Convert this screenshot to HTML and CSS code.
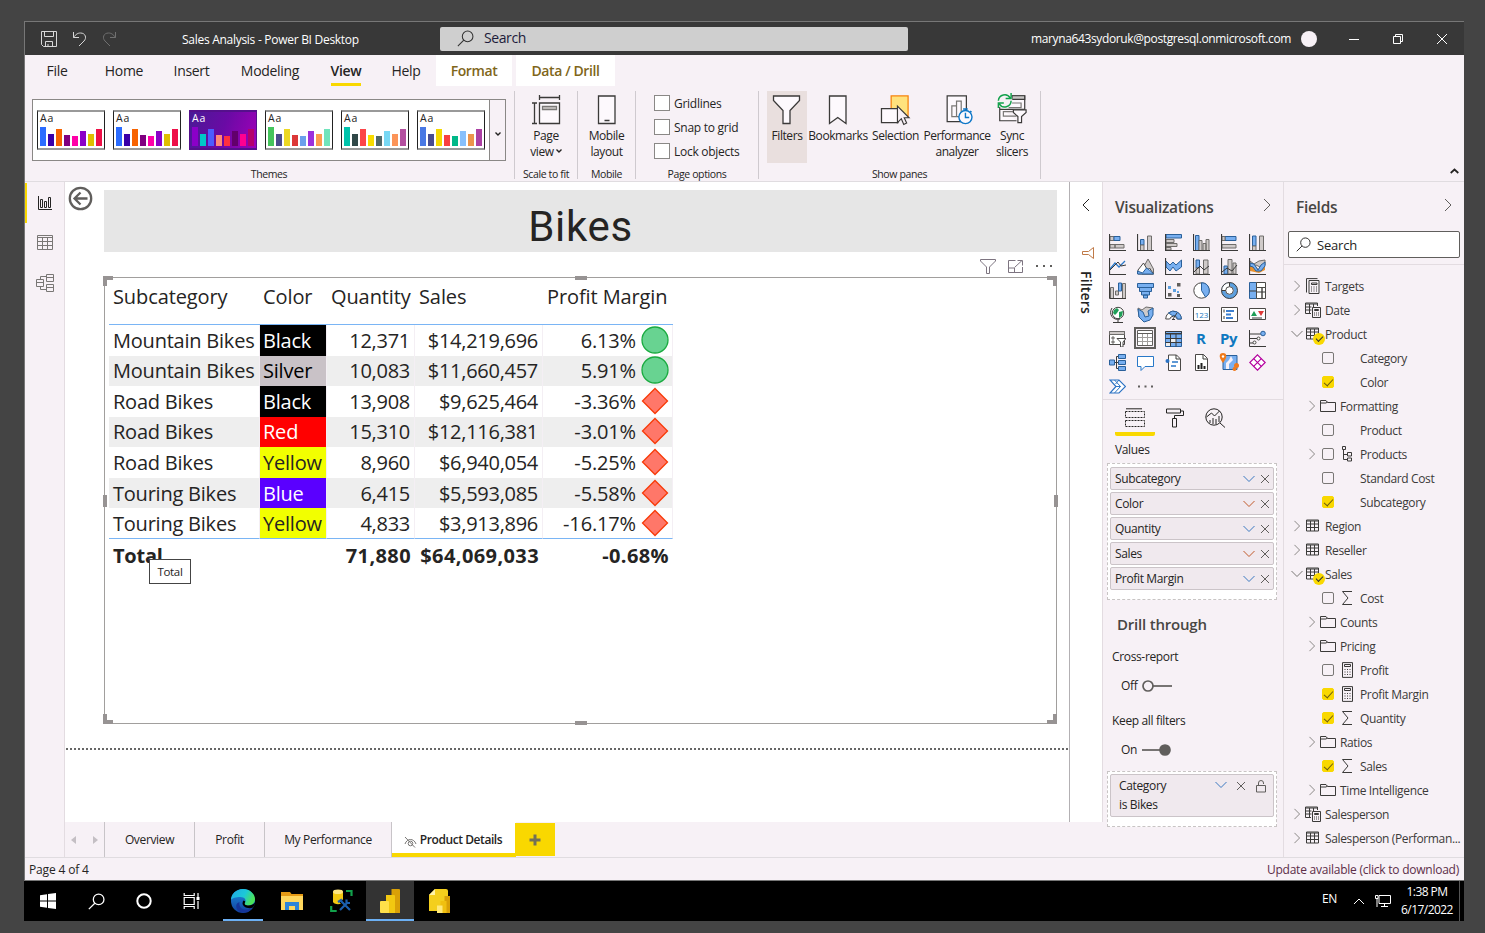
FILE: index.html
```html
<!DOCTYPE html>
<html lang="en">
<head>
<meta charset="utf-8">
<title>Sales Analysis - Power BI Desktop</title>
<link rel="stylesheet" href="styles.css">
</head>
<body>
<svg class="defs" width="0" height="0">
  <symbol id="search" viewBox="0 0 16 16"><circle cx="10" cy="6" r="5"/><path d="M6.4 9.6L.8 15.2"/></symbol>
  <symbol id="right" viewBox="0 0 8 14"><path d="M1 1l6 6-6 6"/></symbol>
  <symbol id="left" viewBox="0 0 8 14"><path d="M7 1L1 7l6 6"/></symbol>
  <symbol id="down" viewBox="0 0 12 8"><path d="M.5 1L6 6.5 11.500 1"/></symbol>
  <symbol id="close" viewBox="0 0 10 10"><path d="M1 1l8 8M9 1L1 9"/></symbol>
  <symbol id="table" viewBox="0 0 16 16"><path d="M1.500 2h12v11h-12zM1.500 3h12M1.500 6h12M1.500 9.500h12M5.500 3v10M9.500 3v10"/></symbol>
  <symbol id="calc" viewBox="0 0 16 16"><path d="M3.500.6h10v14.800h-10zM5.500 2.500h6v2h-6z"/><path stroke-dasharray="1 1.500" d="M5.500 7.500h7M5.500 10h7M5.500 12.500h7"/></symbol>
  <symbol id="calcs" viewBox="0 0 16 16"><path d="M1.500 14.500V.6h11M4 2.500h10v13H4zM6.500 5h5.500v1.500H6.500z"/><path stroke-dasharray="1 1.500" d="M6 9h7M6 11h7M6 13h7"/></symbol>
  <symbol id="tablecalc" viewBox="0 0 16 16"><path d="M6 11.500H.5V1h12v3M.5 2h12M.5 5h6M.5 8h6M4.500 2v9M8.500 2v3"/><path d="M7.500 5.500h8v10h-8zM9.500 7.500h4v1h-4z"/><path stroke-dasharray="1 1" d="M9 11h5M9 13h5"/></symbol>
  <symbol id="folder" viewBox="0 0 16 16"><path d="M.5 13.500v-11h5.500l1.500 2h8v9zM.5 5h5.500l1.500-1"/></symbol>
  <symbol id="sigma" viewBox="0 0 16 16"><path d="M13 1.500H3.500l5.500 6.500-5.500 6.500H13"/></symbol>
  <symbol id="hier" viewBox="0 0 16 16"><path d="M3.500.5h3v3h-3zM4.500 3.500v10h4M4.500 8.500h4M8.500 6.500h4v3.500h-4zM8.500 12h4v3h-4z"/></symbol>
  <symbol id="axes" viewBox="0 0 17 17"><path fill="none" stroke="#3b3a39" stroke-width="1.200" d="M.5 0v16.500H17"/></symbol>
</svg>

<div class="window">
  <header class="titlebar">
    <div class="quick">
      <svg width="16" height="16" viewBox="0 0 16 16"><path d="M.5.5h15v15H2.500l-2-2zM3.500.5v5h9v-5M4.500 15.500v-5h7v5M7 13v2"/></svg>
      <svg width="15" height="16" viewBox="0 0 15 16"><path d="M1.500 1v5.500H7M1.500 6.500C4 3 6 2 8.500 2c5 0 6.500 5 3.500 8l-5 5"/></svg>
      <svg class="dim" width="15" height="16" viewBox="0 0 15 16"><path d="M13.500 1v5.500H8M13.500 6.500C11 3 9 2 6.500 2c-5 0-6.500 5-3.500 8l5 5"/></svg>
    </div>
    <div class="doc-title">Sales Analysis - Power BI Desktop</div>
    <div class="top-search"><svg width="17" height="17"><use href="#search"/></svg><span>Search</span></div>
    <div class="account"><span>maryna643sydoruk@postgresql.onmicrosoft.com</span><i class="avatar"></i></div>
    <div class="winbtns">
      <svg width="12" height="12" viewBox="0 0 12 12"><path d="M1 6.500h10"/></svg>
      <svg width="12" height="12" viewBox="0 0 12 12"><path d="M1.500 3.500h7v7h-7zM3.500 3.500v-2h7v7h-2"/></svg>
      <svg width="12" height="12" viewBox="0 0 12 12"><path d="M1 1l10 10M11 1L1 11"/></svg>
    </div>
  </header>

  <nav class="menu">
    <a class="m-file">File</a><a class="m-home">Home</a><a class="m-insert">Insert</a><a class="m-model">Modeling</a><a class="m-view on">View</a><a class="m-help">Help</a><a class="m-format ctx">Format</a><a class="m-data ctx">Data / Drill</a>
  </nav>

  <section class="ribbon">
    <div class="group g-themes">
      <div class="gallery">
        <div class="cards">
          <div class="card t1"><b>Aa</b><div class="bars"><i></i><i></i><i></i><i></i><i></i><i></i><i></i><i></i></div></div>
          <div class="card t1"><b>Aa</b><div class="bars"><i></i><i></i><i></i><i></i><i></i><i></i><i></i><i></i></div></div>
          <div class="card t3"><b>Aa</b><div class="bars"><i></i><i></i><i></i><i></i><i></i><i></i><i></i><i></i></div></div>
          <div class="card t4"><b>Aa</b><div class="bars"><i></i><i></i><i></i><i></i><i></i><i></i><i></i><i></i></div></div>
          <div class="card t5"><b>Aa</b><div class="bars"><i></i><i></i><i></i><i></i><i></i><i></i><i></i><i></i></div></div>
          <div class="card t6"><b>Aa</b><div class="bars"><i></i><i></i><i></i><i></i><i></i><i></i><i></i><i></i></div></div>
        </div>
        <div class="more"><svg width="6" height="4" viewBox="0 0 6 4"><path d="M.5.5L3 3 5.500.5"/></svg></div>
      </div>
      <div class="glabel">Themes</div>
    </div>
    <div class="group g-scale">
      <div class="rbtn"><svg width="30" height="30" viewBox="0 0 30 30"><g fill="none" stroke="#3b3a39" stroke-width="1.300"><path d="M8.500 0v5M28.500 0v5M8.500 2.500h20M1 8h5M1 28.500h5M3.500 8v20.500"/><path fill="#fdf9fd" d="M8.500 8h20v20.500h-20z"/><path fill="#d2cdcd" stroke="#797775" d="M11.500 11.500h14v3h-14z"/></g></svg><span>Page<br>view<svg class="tiny" width="6" height="4" viewBox="0 0 6 4"><path d="M.5.5L3 3 5.500.5"/></svg></span></div>
      <div class="glabel">Scale to fit</div>
    </div>
    <div class="group g-mobile">
      <div class="rbtn"><svg width="30" height="30" viewBox="0 0 30 30"><path fill="#fdf9fd" stroke="#3b3a39" stroke-width="1.300" d="M6.500 1h16.500v27.500H6.500zM12.500 25.500h5"/></svg><span>Mobile<br>layout</span></div>
      <div class="glabel">Mobile</div>
    </div>
    <div class="group g-options">
      <div class="checks"><label><i></i>Gridlines</label><label><i></i>Snap to grid</label><label><i></i>Lock objects</label></div>
      <div class="glabel">Page options</div>
    </div>
    <div class="group g-panes">
      <div class="panes">
        <div class="rbtn p1 sel"><svg width="30" height="30" viewBox="0 0 30 30"><path fill="#fdf9fd" stroke="#3b3a39" stroke-width="1.300" d="M1.500 1h26v4.500l-9.500 10v13h-7v-13l-9.500-10z"/></svg><span>Filters</span></div>
        <div class="rbtn p2"><svg width="30" height="30" viewBox="0 0 30 30"><path fill="#fdf9fd" stroke="#3b3a39" stroke-width="1.300" d="M6.500 1h16.500v27.500l-8.250-6-8.250 6z"/></svg><span>Bookmarks</span></div>
        <div class="rbtn p3"><svg width="30" height="31" viewBox="0 0 30 31"><path fill="#ffe27d" stroke="#f7830c" stroke-width="1.300" d="M10 1h17.500v20.500H10z"/><path fill="#fdf9fd" stroke="#3b3a39" stroke-width="1.300" d="M0 14h17v14.500H0z"/><path fill="#f8f1f6" stroke="#3b3a39" stroke-width="1.200" d="M16.500 11.500v17l4-4 2.500 6 3-1.500-2.500-5.500h5z"/></svg><span>Selection</span></div>
        <div class="rbtn p4"><svg width="30" height="32" viewBox="0 0 30 32"><g fill="none" stroke="#3b3a39" stroke-width="1.300"><path fill="#fdf9fd" d="M4.500 1h20.500v27.500H4.500z"/><path stroke="#797775" d="M9.500 23V11.500h5V23zM14.500 23V6.500h5V23z"/></g><circle cx="24" cy="23.500" r="7" fill="#fdf9fd" stroke="#0f78c8" stroke-width="1.500"/><path fill="none" stroke="#0f78c8" stroke-width="1.500" d="M24 19v5h4M21.500 15h5M24 15v2M29 17l1.500 1.500"/></svg><span>Performance<br>analyzer</span></div>
        <div class="rbtn p5"><svg width="34" height="33" viewBox="0 0 34 33"><g fill="none" stroke="#3b3a39" stroke-width="1.300"><path fill="#fdf9fd" d="M3.500 15v15.500H22M17 3h14v15H3.500"/><path fill="#c8c6c4" d="M17 3h14v4H17z"/><path stroke="#797775" d="M17 11h10v5H13M18 20.500H7.500v5H22"/><path fill="#fdf9fd" d="M18.500 18.500h14v3l-5 4.500v6.500h-4V26l-5-4.500z"/></g><circle cx="9" cy="8.500" r="8.500" fill="#f7f1f6"/><path fill="none" stroke="#12a14b" stroke-width="1.600" d="M2 8.500A7 7 0 0 1 15 5.500M16 0v6h-6M16 8.500A7 7 0 0 1 3 12M2 16.500v-5.500h6"/></svg><span>Sync<br>slicers</span></div>
      </div>
      <div class="glabel">Show panes</div>
    </div>
    <svg class="collapse" width="9" height="6" viewBox="0 0 9 6"><path d="M.7 5l3.800-3.500L8.300 5"/></svg>
  </section>

  <main class="body">
    <aside class="views">
      <div class="view on"><svg width="14" height="14" viewBox="0 0 14 14"><path d="M.5 0v13.500H14M2.500 3.500h2v8h-2zM6.500 5.500h2v6h-2zM10.500 1.500h2v10h-2z"/></svg></div>
      <div class="view"><svg width="16" height="16" viewBox="0 0 16 16"><path d="M.5.5h15v14H.5zM.5 2.500h15M.5 6.500h15M.5 10.500h15M5.500 2.500v12M10.500 2.500v12"/></svg></div>
      <div class="view"><svg width="18" height="18" viewBox="0 0 18 18"><path d="M.5 5.500h7v7h-7zM.5 8.500h7M10.500.5h7v7h-7zM10.500 3.500h7M10.500 10.500h7v7h-7zM10.500 13.500h7M4.500 5.500V2.500h6M4.500 12.500v3h6"/></svg></div>
    </aside>

    <div class="center">
      <div class="workspace">
        <div class="canvas">
          <svg class="back" width="25" height="25" viewBox="0 0 25 25"><circle cx="12.500" cy="12.500" r="10.700"/><path d="M19.500 12.500H7M12.500 6.500l-6 6 6 6"/></svg>
          <div class="page">
            <h1>Bikes</h1>
            <div class="vhead">
              <svg width="16" height="15" viewBox="0 0 16 15"><path d="M.5.5h15v1.500L9.500 8v6.500h-3V8L.5 2z"/></svg>
              <svg width="15" height="13" viewBox="0 0 15 13"><path d="M7.500.5h-7v12h14V7M.5 8h6v4.500M6.500 7.500l7.500-7M9.500.5h5v5"/></svg>
              <svg width="16" height="4" viewBox="0 0 16 4"><path fill="#605e5c" stroke="none" d="M0 1h2v2H0zM7 1h2v2H7zM14 1h2v2h-2z"/></svg>
            </div>
            <div class="visual">
              <i class="h nw"></i><i class="h n"></i><i class="h ne"></i><i class="h w"></i><i class="h e"></i><i class="h sw"></i><i class="h s"></i><i class="h se"></i>
              <table>
                <colgroup><col class="c1"><col class="c2"><col class="c3"><col class="c4"><col class="c5"></colgroup>
                <thead><tr><th>Subcategory</th><th class="hue">Color</th><th class="r">Quantity</th><th>Sales</th><th>Profit Margin</th></tr></thead>
                <tbody>
                  <tr><td>Mountain Bikes</td><td class="hue black">Black</td><td class="r">12,371</td><td class="r">$14,219,696</td><td class="kpi">6.13%<svg width="28" height="28" viewBox="0 0 28 28"><circle class="good" cx="14" cy="14" r="13"/></svg></td></tr>
                  <tr><td>Mountain Bikes</td><td class="hue silver">Silver</td><td class="r">10,083</td><td class="r">$11,660,457</td><td class="kpi">5.91%<svg width="28" height="28" viewBox="0 0 28 28"><circle class="good" cx="14" cy="14" r="13"/></svg></td></tr>
                  <tr><td>Road Bikes</td><td class="hue black">Black</td><td class="r">13,908</td><td class="r">$9,625,464</td><td class="kpi">-3.36%<svg width="28" height="28" viewBox="0 0 28 28"><path class="bad" d="M14 1.500L26.500 14 14 26.500 1.500 14z"/></svg></td></tr>
                  <tr><td>Road Bikes</td><td class="hue red">Red</td><td class="r">15,310</td><td class="r">$12,116,381</td><td class="kpi">-3.01%<svg width="28" height="28" viewBox="0 0 28 28"><path class="bad" d="M14 1.500L26.500 14 14 26.500 1.500 14z"/></svg></td></tr>
                  <tr><td>Road Bikes</td><td class="hue yellow">Yellow</td><td class="r">8,960</td><td class="r">$6,940,054</td><td class="kpi">-5.25%<svg width="28" height="28" viewBox="0 0 28 28"><path class="bad" d="M14 1.500L26.500 14 14 26.500 1.500 14z"/></svg></td></tr>
                  <tr><td>Touring Bikes</td><td class="hue blue">Blue</td><td class="r">6,415</td><td class="r">$5,593,085</td><td class="kpi">-5.58%<svg width="28" height="28" viewBox="0 0 28 28"><path class="bad" d="M14 1.500L26.500 14 14 26.500 1.500 14z"/></svg></td></tr>
                  <tr><td>Touring Bikes</td><td class="hue yellow">Yellow</td><td class="r">4,833</td><td class="r">$3,913,896</td><td class="kpi">-16.17%<svg width="28" height="28" viewBox="0 0 28 28"><path class="bad" d="M14 1.500L26.500 14 14 26.500 1.500 14z"/></svg></td></tr>
                </tbody>
                <tfoot><tr><td>Total</td><td></td><td class="r">71,880</td><td class="r">$64,069,033</td><td class="r">-0.68%</td></tr></tfoot>
              </table>
              <div class="tip">Total</div>
            </div>
          </div>
          <div class="page-end"></div>
        </div>
        <aside class="filters">
          <svg class="chev" width="8" height="14"><use href="#left"/></svg>
          <svg class="fun" width="12" height="12" viewBox="0 0 12 12"><path d="M11.500.5v11L6.500 7.500H.5v-3h6z" fill="none" stroke="#c07a48"/></svg>
          <span>Filters</span>
        </aside>
      </div>
      <div class="pages">
        <div class="arrows"><i class="al"></i><i class="ar"></i></div>
        <a class="t-over">Overview</a><a class="t-profit">Profit</a><a class="t-perf">My Performance</a>
        <a class="t-det on"><svg width="13" height="12" viewBox="0 0 13 12"><path d="M1 8c2-6 9-6 11 0M1 1l10 10.500"/><circle cx="6.500" cy="7.500" r="2.300"/></svg>Product Details</a>
        <div class="add"><svg width="12" height="12" viewBox="0 0 12 12"><path d="M6 .5v11M.5 6h11"/></svg></div>
      </div>
    </div>

    <aside class="viz">
      <div class="phead"><h2>Visualizations</h2><svg width="8" height="14"><use href="#right"/></svg></div>
      <div class="icons">
        <svg viewBox="0 0 17 17"><path class="g" d="M1 2.500h4v4H1z"/><path class="b" d="M5 2.500h6v4H5z"/><path class="g" d="M1 10.500h5v3.500H1zM6 10.500h9v3.500H6z"/><use href="#axes"/></svg>
        <svg viewBox="0 0 17 17"><path class="b" d="M3.500 5.500h3.500V11H3.500z"/><path class="g" d="M3.500 11h3.500v5.500H3.500zM10.500 2h4v14.500h-4z"/><use href="#axes"/></svg>
        <svg viewBox="0 0 17 17"><path class="b" d="M1 .5h15.500v3.500H1z"/><path class="g" d="M1 5.500h8v3H1zM1 9.500h11v3H1zM1 13.500h5v2.500H1z"/><use href="#axes"/></svg>
        <svg viewBox="0 0 17 17"><path class="b" d="M2.500 1.500H6v15H2.500z"/><path class="g" d="M6 6.500h3v10H6zM10 9.500h3v7h-3zM13 5.500h3v11h-3z"/><use href="#axes"/></svg>
        <svg viewBox="0 0 17 17"><path class="b" d="M4 2.500h11v4H4z"/><path class="g" d="M1 2.500h3v4H1zM1 10.500h14v3.500H1z"/><use href="#axes"/></svg>
        <svg viewBox="0 0 17 17"><path class="b" d="M3.500 2h3.500v10H3.500z"/><path class="g" d="M3.500 12h3.500v4.500H3.500zM10.500 2h4v14.500h-4z"/><use href="#axes"/></svg>

        <svg viewBox="0 0 17 17"><path class="bl" d="M1 11l5-6 4 4 6-6"/><path class="k" d="M1 12l8-8 3 4 5-1"/><use href="#axes"/></svg>
        <svg viewBox="0 0 17 17"><path class="g" d="M5 12L11 1l5.500 10v5H5z"/><path class="w" d="M1 12l5.500-7 4 7 2-2 4 6H1z"/><path class="b" d="M.5 16v-3l5 2 4-5 3 2 4 4z"/></svg>
        <svg viewBox="0 0 17 17"><path class="b" d="M1 3l4 4 3-3 3 3 5.500-5v7L11 13 8 9l-3 4-4-4z"/><use href="#axes"/></svg>
        <svg viewBox="0 0 17 17"><path class="b" d="M3 2h3.500v8H3z"/><path class="g" d="M3 10h3.500v6H3zM10.500 2H15v14h-4.500z"/><path class="k" d="M1 14l6-6 4 4 5-4"/><use href="#axes"/></svg>
        <svg viewBox="0 0 17 17"><path class="b" d="M3 8h3.500v8H3z"/><path class="g" d="M7 1.500h4V16H7zM12 5h3v11h-3z"/><path class="k" d="M1 14l5-4 5 3 5-6"/><use href="#axes"/></svg>
        <svg viewBox="0 0 17 17"><path class="g" d="M1 3l4 3 5-3 6-1v5l-5 2-4-2-6 2z"/><path fill="#e8912d" d="M1 9l4-3 5 6 6-5v5l-6 3-9-2z"/><path class="b" d="M1 5l4 1 4 6 3-5 4-3v4l-4 5H7L4 9 1 8z"/><use href="#axes"/></svg>

        <svg viewBox="0 0 17 17"><path class="g" d="M1.500 5.500h3v11h-3zM6.500 9h3v4h-3zM13.500 1.500h3v15h-3z"/><path class="b" d="M9.500 1h3v8h-3z"/><path class="k" d="M.5 0v16.500H17"/></svg>
        <svg viewBox="0 0 17 17"><path class="b" d="M.5 1.500h16v4H.5zM2.500 5.500h12v4h-12zM4.500 9.500h8V13h-8zM6.500 13h4v3h-4z"/></svg>
        <svg viewBox="0 0 17 17"><path fill="#605e5c" d="M12 1h3.500v3.500H12zM3 11h3.500v3.500H3zM12 12h3v3h-3z"/><path fill="#5da0df" d="M3 4h3v3H3zM8 7h3v3H8zM12 9h2v2h-2z"/><path class="k" d="M.5 0v16.500H17"/></svg>
        <svg viewBox="0 0 17 17"><circle cx="8.500" cy="8.500" r="7.700" class="w"/><path class="b" d="M8.500.8a7.700 7.700 0 0 1 4 14.300l-4-6.600z"/></svg>
        <svg viewBox="0 0 17 17"><circle cx="8.500" cy="8.500" r="6" fill="none" stroke="#5da0df" stroke-width="4"/><path fill="#fff" d="M.8 8.500h4l3.700-4v-4A8 8 0 0 0 .8 8.500z"/><circle class="k" cx="8.500" cy="8.500" r="8"/><circle class="w" cx="8.500" cy="8.500" r="3.800"/><path class="k" d="M8.500.5v4M.8 8.500h4"/></svg>
        <svg viewBox="0 0 17 17"><path class="b" d="M.5.5h7v16h-7z"/><path class="w" d="M7.500.5h9v5h-9zM7.500 5.500H13v11H7.500zM13 5.500h3.500v11H13z"/><path class="k" d="M.5 9h7M8 10h8"/></svg>

        <svg viewBox="0 0 17 17"><circle cx="9" cy="7" r="5.700" class="w"/><path fill="#1e9e57" d="M5 4l3-2 2 2-2 3-2 2-2-2zM10 6l4-1-1 5-3 2z"/><path class="k" d="M3 2C-1 8 4 15 11 13M9 13.500v3M4 16.500h10"/></svg>
        <svg viewBox="0 0 17 17"><path class="g" d="M1 2l4 2 4-3 7 1-1 7-7 3-6-1z"/><path class="b" d="M1 3l5 3 2 5 4-1-1-5 5-3v7l-3 5-6 2-5-5z"/></svg>
        <svg viewBox="0 0 17 17"><path class="w" d="M.7 13a7.800 7.800 0 0 1 15.600 0h-4a4 4 0 0 0-7.600 0z"/><path class="b" d="M3.500 7A7.800 7.800 0 0 1 16.300 13h-4a4 4 0 0 0-5-3.500z"/><path class="k" d="M8 13l4-6M7 13.500h3"/></svg>
        <svg viewBox="0 0 17 17"><path class="w" d="M.5 1.500h16v13H.5z"/><text x="1.800" y="11.500" class="num">123</text></svg>
        <svg viewBox="0 0 17 17"><path class="w" d="M.5 1.500h16v14H.5z"/><path class="k" d="M3 3.500v3M3 10v3"/><path stroke="#3d7fd0" stroke-width="2" d="M5 5h8M5 8.500h5M5 12h7"/></svg>
        <svg viewBox="0 0 17 17"><path class="w" d="M.5 2.500h16v11H.5z"/><path fill="#1e9e57" d="M2 10l3-5 3 5z"/><path fill="#e03a3a" d="M9 5h6l-3 5z"/><path class="k" d="M3 12h10"/></svg>

        <svg viewBox="0 0 17 17"><path class="w" d="M.5 1.500h15v13H.5z"/><path class="g" d="M.5 1.500h15v3H.5zM3 7h2v2H3zM3 11h2v2H3z"/><path class="w" d="M8 8.500h9l-3 3.500v5h-2.500v-5z"/></svg>
        <svg viewBox="0 0 16 16" class="picked"><path fill="#fff" stroke="#605e5c" d="M.5.5h15v15H.5z"/><path fill="none" stroke="#a19f9d" d="M1 7.500h14M1 11.500h14M5.500 4v11M10.500 4v11"/><path fill="none" stroke="#605e5c" d="M.5 3.500h15"/></svg>
        <svg viewBox="0 0 17 17"><path class="b" d="M.5 1.500h16v15H.5z"/><path fill="#eee" d="M6 9h5v3H6zM1 12h5v4H1z"/><path class="k" d="M.5 4h16M.5 8.500h16M.5 12.500h16M5.500 4v12.500M11 4v12.500M.5 1.500h16v2H.5z"/></svg>
        <svg viewBox="0 0 17 17" class="over"><text x="3" y="14" class="lang">R</text></svg>
        <svg viewBox="0 0 17 17" class="over"><text x="-1" y="13.500" class="lang">Py</text></svg>
        <svg viewBox="0 0 17 17"><path class="k" d="M.5 0v16.500H17M1 4h11M1 8.500h8M1 13h4"/><circle cx="14" cy="3.500" r="2.300" class="b"/><circle cx="9.500" cy="8.500" r="1.500" class="w"/><circle cx="5.500" cy="12.500" r="1.500" class="w"/></svg>

        <svg viewBox="0 0 17 17"><path class="k" d="M5 8.500h4M7.500 2.500v12M7.500 2.500h3M7.500 14.500h3"/><path class="b" d="M.5 6h5v5h-5zM9.500.5h7v4h-7zM9.500 6.500h7v4h-7zM9.500 12.500h7v4h-7z"/></svg>
        <svg viewBox="0 0 17 17"><path class="w talk" d="M.5 2.500h16v10H8l-4 4v-4H.5z"/></svg>
        <svg viewBox="0 0 17 17"><path class="w" d="M3.500 1h8l4 4v11.500h-12z"/><path class="k" d="M11 1v4h4"/><path class="bl" d="M7 8h6M6 12h5"/><circle cx="2.500" cy="7" r="2" fill="#2b73c4"/></svg>
        <svg viewBox="0 0 17 17"><path class="w" d="M2.500.5h8l4 4v12h-12z"/><path class="k" d="M10 .5v4.500h4"/><path fill="#222" d="M4.500 11h2v4h-2zM7.500 9h2v6h-2zM10.500 12h2v3h-2z"/></svg>
        <svg viewBox="0 0 17 17" class="over"><path class="b" d="M2 1.500h14v14H2z"/><path fill="#f7f1f6" d="M10 2l2 4-4 4v5H5V9l3-3z"/><path fill="#f07a1a" d="M2-1a3.300 3.300 0 0 1 3.300 3.300C5.300 5 2 9 2 9s-3.300-4-3.300-6.700A3.300 3.300 0 0 1 2-1z"/><circle cx="15.500" cy="11.500" r="2.500" fill="#f07a1a"/><circle cx="13.500" cy="15" r="2" fill="#f07a1a"/><circle cx="2" cy="2.500" r="1.200" fill="#fff"/></svg>
        <svg viewBox="0 0 17 17"><path fill="#fff" stroke="#b4009e" stroke-width="1.200" d="M8.500.8l7.700 7.700-7.700 7.700L.8 8.500z"/><path fill="none" stroke="#b4009e" stroke-width="1.200" d="M4.650 4.650l7.700 7.700M12.350 4.650l-7.700 7.700"/></svg>

        <svg viewBox="0 0 17 17"><path fill="#fff" stroke="#2b73c4" stroke-width="1.200" d="M1 2h9l6.500 6.500L10 15H1l6-6.500z"/><path fill="none" stroke="#2b73c4" d="M5.500 2l6 6.500-6 6.500M10 2L6.500 6M7 8.500h4.500"/></svg>
        <svg viewBox="0 0 17 17"><path fill="#605e5c" d="M1 7.500h2v2H1zM7.500 7.500h2v2h-2zM14 7.500h2v2h-2z"/></svg>
      </div>
      <div class="wells">
        <div class="modes">
          <div class="mode on"><svg width="20" height="20" viewBox="0 0 20 20"><path d="M1 .8h16"/><path stroke-dasharray="2 1" d="M.5 3.500h19v6H.5zM.5 12.500h19v6H.5z"/></svg></div>
          <div class="mode"><svg width="19" height="20" viewBox="0 0 19 20"><path d="M.5 1h14v4H.5zM14.500 3h3v4.500h-9v3M6.500 10.500h4v8.500h-4z"/></svg></div>
          <div class="mode"><svg width="21" height="20" viewBox="0 0 21 20"><circle cx="9" cy="9" r="8.200"/><path d="M15 15l5 4.500M1.500 9l5-4 3 3 5-5M5 12v3M8 10v6M11 11v5M14 8v6"/></svg></div>
        </div>
        <div class="wlabel">Values</div>
        <div class="drop values">
          <div class="pill"><span>Subcategory</span><svg width="12" height="8"><use href="#down"/></svg><svg width="10" height="10"><use href="#close"/></svg></div>
          <div class="pill o"><span>Color</span><svg width="12" height="8"><use href="#down"/></svg><svg width="10" height="10"><use href="#close"/></svg></div>
          <div class="pill"><span>Quantity</span><svg width="12" height="8"><use href="#down"/></svg><svg width="10" height="10"><use href="#close"/></svg></div>
          <div class="pill o"><span>Sales</span><svg width="12" height="8"><use href="#down"/></svg><svg width="10" height="10"><use href="#close"/></svg></div>
          <div class="pill"><span>Profit Margin</span><svg width="12" height="8"><use href="#down"/></svg><svg width="10" height="10"><use href="#close"/></svg></div>
        </div>
        <h3>Drill through</h3>
        <div class="olabel">Cross-report</div>
        <div class="toggle"><span>Off</span><svg width="30" height="12" viewBox="0 0 30 12"><path d="M11 6h19"/><circle cx="6" cy="6" r="5" fill="none"/></svg></div>
        <div class="olabel">Keep all filters</div>
        <div class="toggle"><span>On</span><svg width="30" height="12" viewBox="0 0 30 12"><path d="M0 6h20"/><circle cx="23" cy="6" r="5" fill="#605e5c"/></svg></div>
        <div class="drop through">
          <div class="pill tall"><span>Category<br>is Bikes</span><svg width="12" height="8"><use href="#down"/></svg><svg width="10" height="10"><use href="#close"/></svg><svg width="10" height="13" viewBox="0 0 10 13"><path d="M.5 5.500h9v6.500h-9zM2.500 5.500V3a2.500 2.500 0 0 1 5 0v1"/></svg></div>
        </div>
      </div>
    </aside>

    <aside class="fields">
      <div class="phead"><h2>Fields</h2><svg width="8" height="14"><use href="#right"/></svg></div>
      <div class="fsearch"><svg width="15" height="15"><use href="#search"/></svg><span>Search</span></div>
      <div class="tree">
        <div class="row"><svg class="cv" viewBox="0 0 8 14"><use href="#right"/></svg><svg class="ic"><use href="#calcs"/></svg>Targets</div>
        <div class="row"><svg class="cv" viewBox="0 0 8 14"><use href="#right"/></svg><svg class="ic"><use href="#tablecalc"/></svg>Date</div>
        <div class="row"><svg class="cv" viewBox="0 0 12 8"><use href="#down"/></svg><svg class="ic"><use href="#table"/></svg><i class="badge"></i>Product</div>
        <div class="row in"><i class="slot"></i><i class="box"></i><i class="slot2"></i>Category</div>
        <div class="row in"><i class="slot"></i><i class="box ck"></i><i class="slot2"></i>Color</div>
        <div class="row in f"><svg class="cv" viewBox="0 0 8 14"><use href="#right"/></svg><svg class="ic"><use href="#folder"/></svg>Formatting</div>
        <div class="row in"><i class="slot"></i><i class="box"></i><i class="slot2"></i>Product</div>
        <div class="row in"><svg class="cv" viewBox="0 0 8 14"><use href="#right"/></svg><i class="box"></i><svg class="ic2"><use href="#hier"/></svg>Products</div>
        <div class="row in"><i class="slot"></i><i class="box"></i><i class="slot2"></i>Standard Cost</div>
        <div class="row in"><i class="slot"></i><i class="box ck"></i><i class="slot2"></i>Subcategory</div>
        <div class="row"><svg class="cv" viewBox="0 0 8 14"><use href="#right"/></svg><svg class="ic"><use href="#table"/></svg>Region</div>
        <div class="row"><svg class="cv" viewBox="0 0 8 14"><use href="#right"/></svg><svg class="ic"><use href="#table"/></svg>Reseller</div>
        <div class="row"><svg class="cv" viewBox="0 0 12 8"><use href="#down"/></svg><svg class="ic"><use href="#table"/></svg><i class="badge"></i>Sales</div>
        <div class="row in"><i class="slot"></i><i class="box"></i><svg class="ic2"><use href="#sigma"/></svg>Cost</div>
        <div class="row in f"><svg class="cv" viewBox="0 0 8 14"><use href="#right"/></svg><svg class="ic"><use href="#folder"/></svg>Counts</div>
        <div class="row in f"><svg class="cv" viewBox="0 0 8 14"><use href="#right"/></svg><svg class="ic"><use href="#folder"/></svg>Pricing</div>
        <div class="row in"><i class="slot"></i><i class="box"></i><svg class="ic2"><use href="#calc"/></svg>Profit</div>
        <div class="row in"><i class="slot"></i><i class="box ck"></i><svg class="ic2"><use href="#calc"/></svg>Profit Margin</div>
        <div class="row in"><i class="slot"></i><i class="box ck"></i><svg class="ic2"><use href="#sigma"/></svg>Quantity</div>
        <div class="row in f"><svg class="cv" viewBox="0 0 8 14"><use href="#right"/></svg><svg class="ic"><use href="#folder"/></svg>Ratios</div>
        <div class="row in"><i class="slot"></i><i class="box ck"></i><svg class="ic2"><use href="#sigma"/></svg>Sales</div>
        <div class="row in f"><svg class="cv" viewBox="0 0 8 14"><use href="#right"/></svg><svg class="ic"><use href="#folder"/></svg>Time Intelligence</div>
        <div class="row"><svg class="cv" viewBox="0 0 8 14"><use href="#right"/></svg><svg class="ic"><use href="#tablecalc"/></svg>Salesperson</div>
        <div class="row"><svg class="cv" viewBox="0 0 8 14"><use href="#right"/></svg><svg class="ic"><use href="#table"/></svg>Salesperson (Performan...</div>
      </div>
    </aside>
  </main>

  <footer class="status"><span>Page 4 of 4</span><span class="upd">Update available (click to download)</span></footer>
</div>

<div class="taskbar">
  <div class="tk w48"><svg width="16" height="16" viewBox="0 0 16 16"><path fill="#fff" d="M0 2.300L7 1.300v6.200H0zM8 1.100L16 0v7.500H8zM0 8.500h7v6.200l-7-1zM8 8.500h8V16l-8-1.100z"/></svg></div>
  <div class="tk w48"><svg width="17" height="17" viewBox="0 0 16 16"><path fill="none" stroke="#fff" stroke-width="1.200" d="M6.400 9.600L.8 15.200"/><circle cx="10" cy="6" r="5" fill="none" stroke="#fff" stroke-width="1.200"/></svg></div>
  <div class="tk w48"><svg width="16" height="16" viewBox="0 0 16 16"><circle cx="8" cy="8" r="6.700" fill="none" stroke="#fff" stroke-width="2"/></svg></div>
  <div class="tk w47"><svg width="17" height="16" viewBox="0 0 17 16"><path fill="none" stroke="#fff" stroke-width="1.200" d="M1.200 0v2.500h10V0M1.200 16v-2.500h10V16M1.200 4.500h10v7h-10zM15 0v4M15 8v8"/><path fill="#fff" d="M13.500 4h3v3h-3z"/></svg></div>
  <div class="tk edge"><svg width="24" height="24" viewBox="0 0 24 24"><defs><linearGradient id="e1" x1="0" y1="0" x2="1" y2=".4"><stop offset="0" stop-color="#1fa8e8"/><stop offset=".6" stop-color="#1cc8d8"/><stop offset="1" stop-color="#4be35a"/></linearGradient><linearGradient id="e2" x1="0" y1="0" x2="0" y2="1"><stop offset="0" stop-color="#1b8fe0"/><stop offset="1" stop-color="#123f9c"/></linearGradient></defs><circle cx="12" cy="12" r="12" fill="url(#e2)"/><path fill="url(#e1)" d="M0 11C0 5 5 0 12 0s12 5 12 10c0 4-3 6.500-6.500 6.500-3 0-5-1.300-3.500-3 1.800-2.500-.5-5.500-4.500-5.500C5 8 1 9 0 11z"/><path fill="#15359a" d="M8.500 13c-1 6 4 10 12.500 6-3 5-10 6-14 2.500C4 18 5 14 8.500 13z"/><path fill="#000" d="M12.500 11.500c2 .5 2 1.500 1.500 2-1 1.700.5 3 3.500 3 2.500 0 4.500-.8 6.500-3 0 2-.8 3.500-2 5-5 2-10-.5-10.500-4 0-1.200.4-2.300 1-3z"/></svg></div>
  <div class="tk fold"><svg width="22" height="20" viewBox="0 0 22 20"><path fill="#e59a15" d="M0 1h9l1.500 2H22v4H0z"/><path fill="#ffd75e" d="M0 5h22v14H0z"/><path fill="#2d84d8" d="M4 19v-8h14v8h-4v-4H8v4z"/></svg></div>
  <div class="tk dbt"><svg width="23" height="24" viewBox="0 0 23 24"><path fill="none" stroke="#12a14b" stroke-width="2.200" d="M16 2h5.500v5M1.200 17v5h5.500"/><path fill="#f2c811" d="M3 2.500v10C3 16 13 16 13 12.500v-10z"/><ellipse cx="8" cy="2.700" rx="5" ry="2.300" fill="#ffe680"/><path fill="none" stroke="#000" stroke-width="4" d="M11 12l9 9M19 11l-9 10"/><path fill="none" stroke="#1a5fae" stroke-width="2.200" d="M11 12l9 9M18 13l-8 8M8 13l4-2.500M16.500 10.500v3.500H20"/></svg></div>
  <div class="tk pbi"><svg width="20" height="24" viewBox="0 0 20 24"><path fill="#d9a007" d="M11.500 0H19a1 1 0 0 1 1 1v23h-8.500z"/><path fill="#f2c811" d="M6 6h8a1 1 0 0 1 1 1v17H6z"/><path fill="#ffe04a" d="M0 13a1 1 0 0 1 1-1h7a1 1 0 0 1 1 1v11H1a1 1 0 0 1-1-1z"/></svg></div>
  <div class="tk pfile"><svg width="21" height="24" viewBox="0 0 21 24"><path fill="#f4cf1d" d="M6 0h11a2 2 0 0 1 2 2v20H0V6z"/><path fill="#fff3a8" d="M6 0v6H0z"/><path fill="#d9a007" d="M15.500 7H21v17h-5.500z"/><path fill="#f0c010" d="M11.500 12h6v12h-6z"/><path fill="#ffe97a" d="M8 16.500h5.500V24H8z"/></svg></div>
  <div class="tray">
    <span class="en">EN</span>
    <svg width="12" height="7" viewBox="0 0 12 7"><path d="M1 6l5-5 5 5"/></svg>
    <svg class="net" width="16" height="14" viewBox="0 0 16 14"><path d="M4 1.500h11.500v8H4zM.5 1.500H3v3H.5zM2 4.500V13M6 12.500h7M9.500 9.500v3"/></svg>
    <div class="clock">1:38 PM<br>6/17/2022</div>
    <i class="peek"></i>
  </div>
</div>
</body>
</html>
```
FILE: styles.css
```css
* { box-sizing: border-box; }
body { margin: 0; width: 1485px; height: 933px; overflow: hidden; background: #444; padding: 21px 21px 0 24px; font: 12px/16px "Open Sans", "Noto Sans", sans-serif; letter-spacing: -.35px; color: #252423; }
i { font-style: normal; }
svg { display: block; flex: none; fill: none; stroke: currentColor; }
.defs { position: absolute; }
.window { width: 1440px; height: 860px; border: 1px solid #777; border-right: 0; background: #f7f1f6; display: flex; flex-direction: column; }

.titlebar { height: 33px; background: #383838; color: #fff; display: flex; align-items: center; font-size: 12px; flex: none; }
.quick { display: flex; width: 157px; padding-left: 16px; gap: 15px; color: #d8d8d8; }
.quick .dim { color: #707070; }
.doc-title { width: 258px; padding-top: 2px; letter-spacing: -.28px; }
.top-search { width: 468px; height: 24px; border-radius: 2px; background: #cfcfcf; color: #1d1b3a; display: flex; align-items: center; padding: 0 0 1px 17px; gap: 10px; font-size: 14px; letter-spacing: -.4px; }
.top-search svg { color: #333; }
.account { margin-left: auto; display: flex; align-items: center; gap: 10px; letter-spacing: -.37px; }
.avatar { width: 16px; height: 16px; border-radius: 8px; background: #f7f1f6; }
.winbtns { display: flex; gap: 32px; padding: 1px 16px 0 31px; }

.menu { height: 31px; display: flex; flex: none; font-size: 14px; line-height: 32px; letter-spacing: -.3px; text-align: center; }
.menu a { white-space: nowrap; }
.m-file { width: 64px; } .m-home { width: 70px; } .m-insert { width: 65px; } .m-model { width: 92px; } .m-view { width: 60px; } .m-help { width: 60px; }
.m-format { width: 76px; margin-right: 4px; } .m-data { width: 99px; }
.menu .on { font-weight: 600; background: linear-gradient(#f9d800, #f9d800) center 28px / 30px 3px no-repeat; }
.menu .ctx { background: #fff; color: #80661a; font-weight: 600; letter-spacing: -.4px; }

.ribbon { height: 96px; padding-top: 5px; display: flex; flex: none; border-bottom: 1px solid #e0dce0; position: relative; }
.group { height: 88px; border-right: 1px solid #cfcacf; display: flex; flex-direction: column; }
.g-themes { width: 490px; padding: 8px 0 0 7px; }
.g-scale { width: 63px; } .g-mobile { width: 58px; } .g-options { width: 123px; } .g-panes { width: 282px; }
.glabel { margin: auto 0 -1px; font-size: 10.500px; line-height: 12px; text-align: center; letter-spacing: -.38px; }
.g-themes .glabel { width: 474px; }
.gallery { width: 474px; height: 62px; border: 1px solid #8a8886; background: #fff; display: flex; }
.cards { width: 457px; padding: 10px 0 0 4px; display: flex; gap: 8px; border-right: 1px solid #8a8886; }
.card { width: 68px; height: 40px; border: 1px solid #222; border-top: 2px solid #999; border-bottom: 2px solid #999; background: #fff; display: flex; flex-direction: column; justify-content: space-between; padding: 0 2px 2px; }
.card b { font: 10.500px/13px "Open Sans", sans-serif; letter-spacing: .8px; }
.bars { display: flex; align-items: flex-end; gap: 2px; height: 20px; }
.bars i { width: 6px; background: var(--c); }
.bars i:nth-child(1) { height: 19px; } .bars i:nth-child(2) { height: 12px; } .bars i:nth-child(3) { height: 17px; } .bars i:nth-child(4) { height: 11px; }
.bars i:nth-child(5) { height: 10px; } .bars i:nth-child(6) { height: 15px; } .bars i:nth-child(7) { height: 12px; } .bars i:nth-child(8) { height: 17px; }
.t1 i:nth-child(1) { --c: #2b6cff; } .t1 i:nth-child(2) { --c: #3a00a8; } .t1 i:nth-child(3) { --c: #f76300; } .t1 i:nth-child(4) { --c: #800080; } .t1 i:nth-child(5) { --c: #ff00a8; } .t1 i:nth-child(6) { --c: #8b00c8; } .t1 i:nth-child(7) { --c: #dfbf00; } .t1 i:nth-child(8) { --c: #ee1048; }
.t3 { background: linear-gradient(110deg, #4a1a96, #6a0aa5 50%, #a000b8); border-color: #55108c; color: #fff; }
.t3 i:nth-child(1) { --c: #8b00c8; } .t3 i:nth-child(2) { --c: #00c8c8; } .t3 i:nth-child(3) { --c: #4c5cff; } .t3 i:nth-child(4) { --c: #ff8878; } .t3 i:nth-child(5) { --c: #ff2f3f; } .t3 i:nth-child(6) { --c: #62006c; } .t3 i:nth-child(7) { --c: #ff0090; } .t3 i:nth-child(8) { --c: #b4006c; }
.t4 i:nth-child(1) { --c: #45c45c; } .t4 i:nth-child(2) { --c: #4a4c8c; } .t4 i:nth-child(3) { --c: #ecd824; } .t4 i:nth-child(4) { --c: #dc3838; } .t4 i:nth-child(5) { --c: #6ba0ec; } .t4 i:nth-child(6) { --c: #9c30dc; } .t4 i:nth-child(7) { --c: #fc9c50; } .t4 i:nth-child(8) { --c: #70e4bc; }
.t5 i:nth-child(1) { --c: #00c4ac; } .t5 i:nth-child(2) { --c: #304848; } .t5 i:nth-child(3) { --c: #fc4448; } .t5 i:nth-child(4) { --c: #f8dc00; } .t5 i:nth-child(5) { --c: #506868; } .t5 i:nth-child(6) { --c: #78d8f4; } .t5 i:nth-child(7) { --c: #fc9458; } .t5 i:nth-child(8) { --c: #b450a0; }
.t6 i:nth-child(1) { --c: #4878e4; } .t6 i:nth-child(2) { --c: #484c90; } .t6 i:nth-child(3) { --c: #f4d800; } .t6 i:nth-child(4) { --c: #f84040; } .t6 i:nth-child(5) { --c: #00b888; } .t6 i:nth-child(6) { --c: #88c0fc; } .t6 i:nth-child(7) { --c: #ec944c; } .t6 i:nth-child(8) { --c: #ac40a4; }
.more { flex: 1; background: #f7f1f6; display: flex; align-items: center; justify-content: center; padding-top: 7px; }
.more svg, .tiny { stroke-width: 1.400; }
.rbtn { text-align: center; display: flex; flex-direction: column; align-items: center; padding-top: 4px; white-space: nowrap; letter-spacing: -.42px; }
.rbtn > svg { stroke: none; height: 30px; margin-bottom: 3px; overflow: visible; }
.rbtn .tiny { display: inline-block; margin: 0 0 3px 2px; }
.checks { padding: 4px 0 0 18px; }
.checks label { display: flex; height: 24px; align-items: flex-start; line-height: 18px; letter-spacing: -.27px; }
.checks i { width: 16px; height: 16px; border: 1px solid #8a8886; background: #fff; margin-right: 4px; }
.panes { display: flex; padding-left: 8px; }
.panes .rbtn { height: 72px; }
.sel { background: #e9dfde; }
.p1 { width: 40px; } .p2 { width: 62px; } .p3 { width: 53px; } .p4 { width: 70px; } .p5 { width: 40px; }
.p4 { letter-spacing: -.52px; }
.p5 > svg { transform: translateY(-2px); }
.collapse { position: absolute; right: 5px; bottom: 7px; stroke-width: 1.700; }

.body { flex: 1; min-height: 0; display: flex; height: 675px; }
.views { width: 40px; border-right: 1px solid #e3dce1; flex: none; padding-top: 1px; }
.view { height: 40px; display: flex; align-items: center; justify-content: center; color: #797775; }
.view.on { box-shadow: inset 2px 0 #f9d800; color: #252423; }
.center { width: 1038px; display: flex; flex-direction: column; flex: none; }
.workspace { height: 640px; display: flex; background: #fff; }
.canvas { width: 1004px; position: relative; padding: 8px 12px 0 39px; }
.back { position: absolute; left: 3px; top: 4px; stroke: #605e5c; stroke-width: 2.300; }
.page { height: 558px; }
h1 { margin: 0; height: 62px; background: #e6e6e6; text-align: center; font: 42px/74px Roboto, sans-serif; letter-spacing: .7px; color: #252423; }
.vhead { height: 25px; display: flex; justify-content: flex-end; align-items: center; gap: 13px; padding: 3px 5px 0 0; color: #7d7480; }
.vhead svg:first-child { margin-right: -1px; }
.visual { width: 953px; height: 447px; border: 1px solid #a19f9d; position: relative; padding: 5px 0 0 4px; }
.h { position: absolute; border: 0 solid #979393; }
.nw { left: -2px; top: -2px; width: 10px; height: 10px; border-width: 4px 0 0 4px; }
.ne { right: -1px; top: -2px; width: 10px; height: 10px; border-width: 4px 4px 0 0; }
.sw { left: -2px; bottom: -1px; width: 10px; height: 10px; border-width: 0 0 4px 4px; }
.se { right: -1px; bottom: -1px; width: 10px; height: 10px; border-width: 0 4px 4px 0; }
.n, .s { left: 470px; width: 12px; height: 4px; background: #979393; }
.n { top: -2px; } .s { bottom: -2px; }
.w, .e { top: 217px; width: 4px; height: 12px; background: #979393; }
.w { left: -2px; } .e { right: -2px; }
table { table-layout: fixed; width: 564px; border-collapse: separate; border-spacing: 0; font-size: 20px; line-height: 28px; letter-spacing: -.22px; }
.c1 { width: 151px; } .c2 { width: 67px; } .c3 { width: 88px; } .c4 { width: 128px; } .c5 { width: 130px; }
th, td { padding: 0 4px; text-align: left; white-space: nowrap; font-weight: 400; overflow: visible; }
.r { text-align: right; }
.hue { padding-left: 3px; }
thead th { height: 42px; vertical-align: top; border-bottom: 1px solid #7ab5f5; letter-spacing: -.1px; }
thead th.r { padding-right: 5px; }
tbody td { height: 30.570px; border-right: 1px solid #f4eff4; padding-top: 1px; }
tbody td.r { letter-spacing: -.28px; }
tbody tr:nth-child(even) td { background: #eee; }
tbody tr:last-child td { border-bottom: 1px solid #7ab5f5; }
tbody .black { background: #000 !important; color: #fff; } tbody .silver { background: #c9c2c7 !important; color: #000; }
tbody .red { background: #f00 !important; color: #fff; } tbody .yellow { background: #f2ff00 !important; } tbody .blue { background: #5a00ff !important; color: #fff; }
tfoot td { font-weight: 700; height: 34px; }
tfoot .r { letter-spacing: .4px; }
.kpi svg { float: right; stroke: none; margin-left: 5px; margin-top: -1px; }
td.kpi { text-align: right; padding-right: 3px; letter-spacing: -.15px; }
.good { fill: #68d391; stroke: #1aab40; stroke-width: 1.300; }
.bad { fill: #ff7769; stroke: #f73a08; stroke-width: 1.300; }
.tip { position: absolute; left: 44px; top: 281px; width: 42px; height: 25px; border: 1px solid #444; background: #fff; text-align: center; line-height: 23px; font-size: 11.500px; }
.page-end { margin: 0 -12px 0 -38px; height: 2px; background: repeating-linear-gradient(90deg, #666 0 2px, transparent 2px 4px); }
.filters { width: 34px; border-left: 1px solid #b3b0b3; border-right: 1px solid #e3dce1; position: relative; display: flex; flex-direction: column; align-items: center; padding-top: 16px; }
.filters .fun { margin: 35px 0 0 4px; }
.filters span { writing-mode: vertical-rl; font-size: 14px; font-weight: 600; margin-top: 12px; letter-spacing: .2px; }
.pages { height: 35px; display: flex; line-height: 35px; }
.pages a, .arrows { border-right: 1px solid #c8c4c8; text-align: center; }
.arrows { width: 40px; display: flex; align-items: center; gap: 17px; padding-left: 6px; }
.arrows i { border: 4px solid transparent; border-width: 4px 5px; }
.al { border-right-color: #c4bfc4 !important; border-left: 0 !important; } .ar { border-left-color: #c4bfc4 !important; border-right: 0 !important; }
.t-over { width: 90px; } .t-profit { width: 70px; } .t-perf { width: 127px; }
.pages .t-det { width: 124px; padding-right: 2px; background: #fff; box-shadow: inset 0 -4px #f9d800; border-right: 0; font-weight: 600; display: flex; align-items: center; justify-content: center; gap: 3px; letter-spacing: -.42px; }
.t-det svg { color: #797775; margin-top: 4px; }
.add { width: 40px; height: 33px; margin: 1px 0 0 -1px; background: #f9d800; display: flex; align-items: center; justify-content: center; }
.add svg { stroke: #737057; stroke-width: 3; }

.phead { display: flex; align-items: flex-start; color: #605e5c; }
.phead h2 { flex: 1; margin: 0; font: 600 15.500px/23px "Open Sans", sans-serif; letter-spacing: -.3px; color: #484644; height: 22px; }
.phead svg { margin-top: 2px; }
.viz { width: 181px; border-right: 1px solid #e3dce1; padding-top: 14px; flex: none; }
.viz .phead { padding: 0 12px 0 12px; }
.icons { margin: 16px 0 0 6px; display: grid; grid-template-columns: repeat(6, 28px); grid-auto-rows: 24px; height: 165px; }
.icons svg { width: 17px; height: 17px; stroke: none; fill: none; }
.icons .b { fill: #78aff0; stroke: #2a609a; } .icons .g { fill: #cfcac9; stroke: #6e6c6a; } .icons .w { fill: #fff; stroke: #4a4846; }
.icons .k { fill: none; stroke: #3b3a39; } .icons .bl { fill: none; stroke: #2b78c8; stroke-width: 1.300; }
.icons .talk { stroke: #2878c8; }
.icons .picked { width: 22px; height: 22px; margin: -3px; border: 2px solid #605e5c; padding: 1px; }
.icons .over { overflow: visible; }
.num { font: 8px "Open Sans", sans-serif; fill: #1a78c0; letter-spacing: -.1px; }
.lang { font: 700 15px "Open Sans", sans-serif; fill: #0f78c0; letter-spacing: -.5px; }
.wells { border-top: 1px solid #e3dce1; padding-top: 7px; }
.modes { display: flex; padding-left: 12px; }
.mode { width: 40px; height: 29px; display: flex; justify-content: center; padding-top: 1px; }
.mode.on { border-bottom: 4px solid #f9d800; height: 29px; border-radius: 2px; }
.wlabel { padding: 5px 0 0 12px; line-height: 17px; height: 28px; }
.drop { margin: -1px 6px 0 4px; border: 1px dashed #c8c4c4; background: #fff; padding: 3px 2px; }
.values { height: 137px; display: flex; flex-direction: column; gap: 2px; }
.pill { height: 23px; border: 1px solid #cbc4c8; border-radius: 2px; background: #f0e9ee; display: flex; align-items: center; padding: 0 3px 0 4px; gap: 5px; }
.pill span { flex: 1; line-height: 19px; }
.pill svg { color: #605e5c; }
.pill svg:nth-child(2) { color: #3a78c0; }
.pill.o svg:nth-child(2) { color: #c05828; }
h3 { margin: 13px 0 0 14px; font: 600 15px/22px "Open Sans", sans-serif; letter-spacing: -.2px; color: #484644; }
.olabel { margin: 14px 0 0 9px; height: 16px; }
.toggle { display: flex; align-items: center; gap: 4px; padding: 13px 0 0 18px; }
.toggle svg { stroke: #605e5c; stroke-width: 1.700; }
.toggle + .olabel { margin-top: 19px; }
.toggle span { width: 17px; }
.through { margin-top: 13px; height: 56px; padding-top: 2px; }
.pill.tall { height: 43px; align-items: flex-start; padding: 1px 7px 0 8px; gap: 10px; }
.tall span { margin-right: -2px; }
.tall svg { margin-top: 5px; }
.tall svg:nth-child(2) { margin-right: -1px; }
.tall svg:nth-child(4) { margin-top: 4px; }

.fields { width: 180px; padding-top: 14px; flex: none; }
.fields .phead { padding: 0 12px 0 12px; }
.fsearch { margin: 13px 0 0 4px; width: 172px; height: 27px; border: 1px solid #605e5c; border-radius: 2px; background: #fff; display: flex; align-items: center; padding-left: 7px; gap: 6px; font-size: 13px; letter-spacing: -.2px; }
.tree { margin-top: 6px; border-top: 1px solid #e3dce1; padding-top: 10px; color: #3b3a39; letter-spacing: -.36px; }
.row { height: 24px; display: flex; align-items: center; padding-left: 7px; position: relative; white-space: nowrap; }
.row.in { padding-left: 22px; }
.cv { width: 12px; height: 12px; color: #797775; margin-top: -2px; }
.ic { width: 16px; height: 16px; margin: -2px 4px 0 2px; }
.slot { width: 12px; }
.box { width: 12px; height: 12px; border: 1px solid #797775; border-radius: 2px; margin: -2px 0 0 4px; flex: none; }
.ck { background: #f9d800; border-color: #f9d800; position: relative; }
.ck::after { content: ""; position: absolute; left: 1px; top: 1.500px; width: 8px; height: 4px; border: solid #6b5d10; border-width: 0 0 1px 1px; transform: rotate(-48deg); }
.slot2 { width: 26px; } .ic2 { width: 16px; height: 16px; margin: -2px 5px 0 5px; }
.badge { position: absolute; left: 29px; top: 10px; width: 12px; height: 12px; border-radius: 6px; background: #f9d800; }
.badge::after { content: ""; position: absolute; left: 3px; top: 3px; width: 6px; height: 3px; border: solid #333; border-width: 0 0 1.500px 1.500px; transform: rotate(-45deg); }
.status { height: 23px; border-top: 1px solid #e0dce0; display: flex; justify-content: space-between; padding: 0 5px 0 4px; line-height: 24px; flex: none; letter-spacing: -.15px; }
.upd { color: #5c2d48; letter-spacing: -.24px; }

.taskbar { width: 1440px; height: 40px; background: #000; color: #fff; display: flex; }
.tk { display: flex; align-items: center; justify-content: center; width: 48px; }
.tk svg { stroke: none; }
.w47 { width: 47px; }
.edge { width: 40px; margin-left: 8px; border-bottom: 2px solid #6cb0f4; }
.edge svg { margin-top: 2px; }
.fold { width: 48px; margin-left: 5px; } .dbt { width: 48px; margin-left: 1px; }
.pbi { margin-left: 1px; background: #333; border-bottom: 2px solid #6cb0f4; } .pfile { width: 50px; }
.pbi svg { margin-top: 2px; }
.tray { margin-left: auto; display: flex; align-items: center; font-size: 12px; letter-spacing: -.55px; }
.en { margin: -4px 16px 0 0; letter-spacing: -.3px; }
.net { margin: 0 9px 0 10px; }
.clock { line-height: 18px; text-align: center; width: 54px; }
.peek { width: 1px; height: 40px; background: #555; margin: 0 4px 0 5px; }
```
